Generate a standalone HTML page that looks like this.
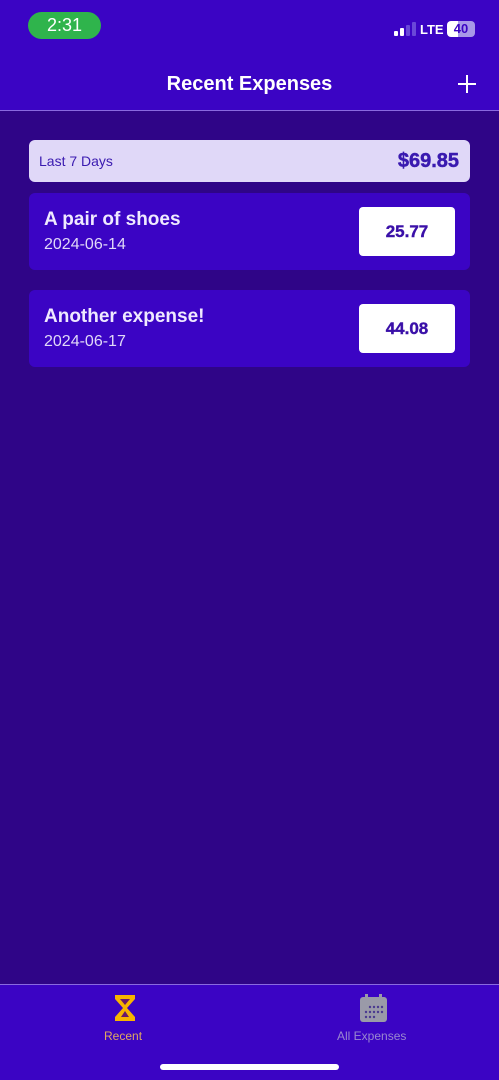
<!DOCTYPE html>
<html><head><meta charset="utf-8"><style>
*{margin:0;padding:0;box-sizing:border-box}
body{width:499px;height:1080px;background:#2f0587;font-family:"Liberation Sans",sans-serif;position:relative;overflow:hidden;color:#fff}
.hdr{position:absolute;left:0;top:0;width:499px;height:111px;background:#3b04c4;border-bottom:1px solid #8a6ae0}
.time{position:absolute;left:28px;top:12px;width:73px;height:27px;border-radius:14px;background:#2fb44c;color:#fff;font-size:18px;text-align:center;line-height:27px}
.title{position:absolute;top:73px;width:100%;text-align:center;font-size:20px;font-weight:bold}
.plus{position:absolute;left:458px;top:75px;width:18px;height:18px}
.plus:before,.plus:after{content:"";position:absolute;background:#fff}
.plus:before{left:8px;top:0;width:2px;height:18px}
.plus:after{top:8px;left:0;height:2px;width:18px}
.sum{position:absolute;left:29px;top:140px;width:441px;height:42px;border-radius:6px;background:#e0d8f8;color:#3a1ab0}
.sum .l{position:absolute;left:10px;top:13px;font-size:14px}
.sum .r{position:absolute;right:11px;top:10px;font-size:20px;font-weight:900;-webkit-text-stroke:0.5px #3a1ab0}
.card{position:absolute;left:29px;width:441px;height:77px;border-radius:6px;background:#3b04c4}
.card .n{position:absolute;left:15px;top:16px;font-size:19px;font-weight:bold;color:#efe9ff}
.card .d{position:absolute;left:15px;top:43px;font-size:16px;color:#e0d8f8}
.card .a{position:absolute;left:330px;top:14px;width:96px;height:49px;background:#fff;border-radius:4px;color:#3a10a8;font-weight:bold;font-size:17px;text-align:center;line-height:49px;-webkit-text-stroke:0.4px #3a10a8}
.tab{position:absolute;left:0;top:984px;width:499px;height:96px;background:#3b04c4;border-top:1px solid #8a6ae0}
.home{position:absolute;left:160px;top:1064px;width:179px;height:6px;border-radius:3px;background:#fff}
</style></head><body>
<div class="hdr">
<div class="time">2:31</div>
<div style="position:absolute;left:394px;top:22px">
<span style="position:absolute;left:0;top:9px;width:4px;height:5px;border-radius:1px;background:#fff"></span>
<span style="position:absolute;left:6px;top:6px;width:4px;height:8px;border-radius:1px;background:#fff"></span>
<span style="position:absolute;left:12px;top:3px;width:4px;height:11px;border-radius:1px;background:#6a48d8"></span>
<span style="position:absolute;left:18px;top:0;width:4px;height:14px;border-radius:1px;background:#6a48d8"></span>
<span style="position:absolute;left:26px;top:0;font-size:13px;font-weight:bold">LTE</span>
<span style="position:absolute;left:53px;top:-1px;width:28px;height:16px;border-radius:4px;background:linear-gradient(90deg,#fff 40%,#a898e8 40%);color:#3b04c4;font-size:13px;font-weight:bold;text-align:center;line-height:16px">40</span>
</div>
<div class="title">Recent Expenses</div>
<div class="plus"></div>
</div>
<div class="sum"><span class="l">Last 7 Days</span><span class="r">$69.85</span></div>
<div class="card" style="top:193px"><div class="n">A pair of shoes</div><div class="d">2024-06-14</div><div class="a">25.77</div></div>
<div class="card" style="top:290px"><div class="n">Another expense!</div><div class="d">2024-06-17</div><div class="a">44.08</div></div>
<div class="tab">
<svg style="position:absolute;left:114px;top:9px" width="22" height="28" viewBox="0 0 22 28"><path d="M1 1H21V5L13 14L21 23V27H1V23L9 14L1 5Z" fill="#f7b500"/><path d="M6 5H16L11 11Z M11 17L15 23H7Z" fill="#6a1a6a"/></svg>
<div style="position:absolute;left:104px;top:44px;font-size:12px;color:#e0a860">Recent</div>
<svg style="position:absolute;left:360px;top:9px" width="27" height="28" viewBox="0 0 27 28"><rect x="0" y="3" width="27" height="25" rx="3" fill="#9a9aa8"/><rect x="5" y="0" width="3" height="6" fill="#9a9aa8"/><rect x="19" y="0" width="3" height="6" fill="#9a9aa8"/><g fill="#4a3a90"><circle cx="10" cy="13" r="1.2"/><circle cx="14" cy="13" r="1.2"/><circle cx="18" cy="13" r="1.2"/><circle cx="22" cy="13" r="1.2"/><circle cx="6" cy="18" r="1.2"/><circle cx="10" cy="18" r="1.2"/><circle cx="14" cy="18" r="1.2"/><circle cx="18" cy="18" r="1.2"/><circle cx="22" cy="18" r="1.2"/><circle cx="6" cy="23" r="1.2"/><circle cx="10" cy="23" r="1.2"/><circle cx="14" cy="23" r="1.2"/></g></svg>
<div style="position:absolute;left:337px;top:44px;font-size:12px;color:#9a88d0">All Expenses</div>
</div>
<div class="home"></div>
</body></html>
